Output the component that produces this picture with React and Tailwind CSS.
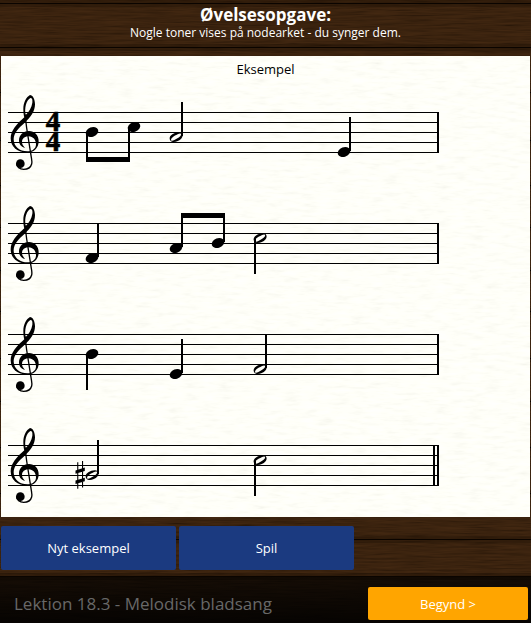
import React from "react";

const SEAMS = [3, 47, 92, 140, 185, 227, 270, 311, 358, 401, 447, 493, 539, 576];

// y is measured in pixels down from the top staff line.
const STAVES = [
  {
    label: "Linje 1: h, c, a, e",
    time: true,
    notes: [
      { x: 91, y: 20, stemX: 85, from: 20, to: 46 },
      { x: 133, y: 15, stemX: 127, from: 15, to: 46 },
      { x: 175, y: 25, half: true, stemX: 180, from: -10, to: 24 },
      { x: 343, y: 40, stemX: 348, from: 5, to: 39 },
    ],
    beam: { x: 85, y: 45 },
  },
  {
    label: "Linje 2: f, a, h, c",
    notes: [
      { x: 91, y: 35, stemX: 96, from: 0, to: 34 },
      { x: 175, y: 25, stemX: 180, from: -9, to: 24 },
      { x: 217, y: 20, stemX: 222, from: -9, to: 19 },
      { x: 259, y: 15, half: true, stemX: 253, from: 16, to: 51 },
    ],
    beam: { x: 180, y: -10 },
  },
  {
    label: "Linje 3: h, e, f",
    notes: [
      { x: 91, y: 20, stemX: 85, from: 20, to: 56 },
      { x: 175, y: 40, stemX: 180, from: 5, to: 39 },
      { x: 259, y: 35, half: true, stemX: 264, from: 0, to: 34 },
    ],
  },
  {
    label: "Linje 4: gis, c",
    end: true,
    sharp: { x: 79, y: 30 },
    notes: [
      { x: 91, y: 30, half: true, stemX: 96, from: -5, to: 29 },
      { x: 259, y: 15, half: true, stemX: 253, from: 16, to: 51 },
    ],
  },
];

function WoodBackground() {
  return (
    <svg className="absolute inset-0 h-full w-full" aria-hidden="true">
      <defs>
        <filter id="grain" x="0" y="0" width="100%" height="100%">
          <feTurbulence type="fractalNoise" baseFrequency="0.03 0.6" numOctaves="3" seed="7" />
          <feColorMatrix values="0.17 0 0 0 0.105  0.11 0 0 0 0.055  0.06 0 0 0 0.012  0 0 0 0 1" colorInterpolationFilters="sRGB" />
        </filter>
      </defs>
      <rect width="100%" height="100%" fill="#36200d" />
      <rect width="100%" height="100%" filter="url(#grain)" />
      {SEAMS.map((y) => (
        <g key={y}>
          <rect y={y - 3} width="100%" height="7" fill="#100700" opacity="0.25" />
          <rect y={y} width="100%" height="1" fill="#080300" opacity="0.95" />
        </g>
      ))}
    </svg>
  );
}

function PaperBackground() {
  return (
    <svg className="absolute inset-0 h-full w-full" aria-hidden="true">
      <defs>
        <filter id="paper" x="0" y="0" width="100%" height="100%">
          <feTurbulence type="fractalNoise" baseFrequency="0.06 0.3" numOctaves="3" seed="3" />
          <feColorMatrix values="0.09 0 0 0 0.935  0.09 0 0 0 0.935  0.1 0 0 0 0.9  0 0 0 0 1" colorInterpolationFilters="sRGB" />
        </filter>
      </defs>
      <rect width="100%" height="100%" filter="url(#paper)" />
    </svg>
  );
}

function Clef() {
  return (
    <g transform="translate(-1 -27) scale(0.333333)">
      <path
        fillRule="evenodd"
        d="M90 30C79 36 70 52 70 72C70 82 71 89 73 97C51 116 32 137 32 160C32 186 53 203 81 203C103 203 116 188 116 169C116 150 103 138 87 138C69 138 57 151 57 166C57 179 65 187 75 189C69 182 66 177 66 171C66 161 74 154 86 154C99 154 108 165 108 178C108 191 98 199 82 199C59 199 41 185 41 163C41 143 57 128 74 113C92 97 105 79 105 58C105 42 98 30 90 30ZM91 39C97 39 98 45 97 53C95 68 87 80 77 90C73 71 78 46 91 39Z"
      />
      <path d="M75 88L80 129L93 211C95 224 97 229 95 237C92 248 83 253 71 253C59 253 50 246 50 236" fill="none" stroke="black" strokeWidth="4" />
      <circle cx="61" cy="236" r="13" />
    </g>
  );
}

function Note({ x, y, half, stemX, from, to }) {
  return (
    <g>
      <rect x={stemX} y={from} width="2" height={to - from} />
      {half ? (
        <path
          transform={`translate(${x} ${y})`}
          fillRule="evenodd"
          d="M-6.3 2C-7 -2-1-5 3-4.8C7-4.6 7.4-1 5.6 1.2C3 4.3-1.3 5.4-4 4.7C-5.5 4.2-6.2 3.2-6.3 2ZM-4.9 3.2C-4.2 4.6-1.2 2.9 1 1.5C3.5-.1 5.7-1.7 5-3.1C4.2-4.4 1.2-2.8-1-1.4C-3.5 .2-5.4 1.8-4.9 3.2Z"
        />
      ) : (
        <ellipse cx={x} cy={y} rx="6.5" ry="4.7" transform={`rotate(-20 ${x} ${y})`} />
      )}
    </g>
  );
}

function Sharp({ x, y }) {
  return (
    <path
      transform={`translate(${x} ${y})`}
      d="M-2.8-12.8h1.1v26.6h-1.1zM2-14h1.1v26.6h-1.1zM-4.5-4.6L4.8-7.4v3.4L-4.5-1.2zM-4.5 5.6L4.8 2.8v3.4L-4.5 9z"
    />
  );
}

function Staff({ staff }) {
  return (
    <svg className="block h-[87px] w-full" role="img" aria-label={staff.label}>
      <g transform="translate(0 19)">
        {[0, 10, 20, 30, 40].map((y) => (
          <rect key={y} x="7" y={y} width="431" height="1" />
        ))}
        <rect x="436" y="0" width="2" height="41" />
        {staff.end && <rect x="432" y="0" width="2" height="41" />}
        <Clef />
        {staff.time && (
          <g fontFamily="Liberation Serif, serif" fontWeight="bold" fontSize="29" textAnchor="middle" stroke="black" strokeWidth="0.6">
            <text x="52" y="19">4</text>
            <text x="52" y="39">4</text>
          </g>
        )}
        {staff.beam && <rect x={staff.beam.x} y={staff.beam.y} width="44" height="5" />}
        {staff.sharp && <Sharp {...staff.sharp} />}
        {staff.notes.map((note) => (
          <Note key={note.x} {...note} />
        ))}
      </g>
    </svg>
  );
}

export default function App() {
  return (
    <div className="relative isolate min-h-screen bg-[#2b180a] font-['Open_Sans','Noto_Sans',sans-serif] text-white">
      <div className="absolute inset-0 -z-10">
        <WoodBackground />
      </div>
      <div className="flex min-h-screen flex-col">
        <header className="h-14 pt-1 text-center">
          <h1 className="text-[17px] leading-[22px] font-bold">Øvelsesopgave:</h1>
          <p className="text-[12px] leading-[14px]">Nogle toner vises på nodearket - du synger dem.</p>
        </header>

        <main className="flex-1 px-px">
          <section className="relative isolate bg-[#fcfcf5] pt-[3px] pb-1 text-black">
            <div className="absolute inset-0 -z-10">
              <PaperBackground />
            </div>
            <h2 className="text-center text-[13px] leading-[20px]">Eksempel</h2>
            <div className="mt-[14px] flex flex-col gap-6">
              {STAVES.map((staff) => (
                <Staff key={staff.label} staff={staff} />
              ))}
            </div>
          </section>
          <div className="flex gap-[3px] pt-[9px] pb-[7px]">
            <button type="button" className="h-11 w-[175px] rounded-[2px] bg-[#1b3a80] pt-[2px] text-[13px]">Nyt eksempel</button>
            <button type="button" className="h-11 w-[175px] rounded-[2px] bg-[#1b3a80] pt-[2px] text-[13px]">Spil</button>
          </div>
        </main>

        <footer className="flex items-center justify-between bg-linear-to-b from-black/65 to-black/90 pt-[10px] pr-[3px] pb-[3px] pl-[14px]">
          <span className="text-[17px] leading-[24px] text-[#686868]">Lektion 18.3 - Melodisk bladsang</span>
          <button type="button" className="h-[33px] w-40 rounded-[2px] bg-[#ffa500] pt-[2px] text-[13px]">Begynd &gt;</button>
        </footer>
      </div>
    </div>
  );
}
